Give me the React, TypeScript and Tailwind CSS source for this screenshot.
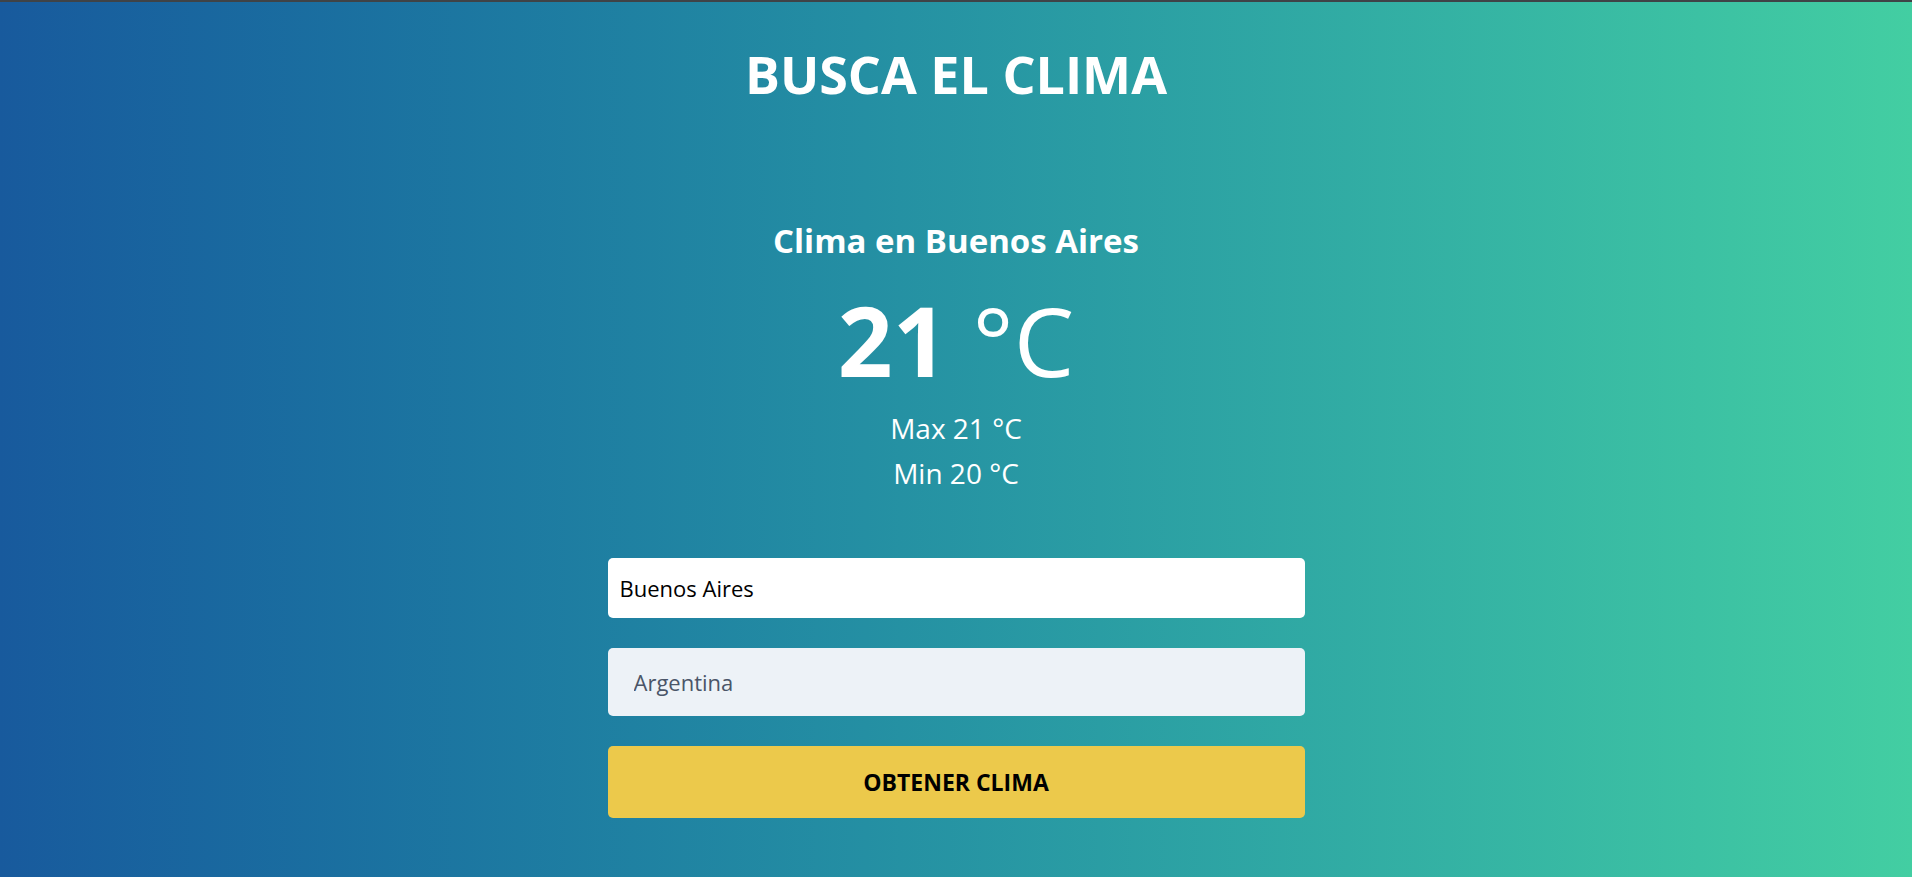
import React, { useState } from "react";

function App() {
  const [city, setCity] = useState("Buenos Aires");
  const [country, setCountry] = useState("Argentina");

  return (
    <div
      className="min-h-[877px] w-full border-t-2 border-[#3f4347] bg-gradient-to-r from-[#185a9d] to-[#43cea2] text-white"
      style={{ fontFamily: '"Open Sans", "Noto Sans", sans-serif' }}
    >
      <header className="flex justify-center pt-[46px]">
        <h1 className="text-[52px] font-bold leading-none">BUSCA EL CLIMA</h1>
      </header>

      <main className="flex flex-col items-center">
        <section className="mt-[124px] flex flex-col items-center">
          <h2 className="text-[33px] font-bold leading-none">Clima en Buenos Aires</h2>
          <p className="mt-[35px] text-[96px] font-bold leading-none">
            21 <span className="font-normal">°C</span>
          </p>
          <div className="mt-[18px] flex flex-col items-center text-[28px] leading-[45px]">
            <p>Max 21 °C</p>
            <p>Min 20 °C</p>
          </div>
        </section>

        <form
          className="mt-[62px] flex w-[697px] flex-col gap-[30px]"
          onSubmit={(e) => e.preventDefault()}
        >
          <input
            type="text"
            value={city}
            onChange={(e) => setCity(e.target.value)}
            className="h-[60px] w-full rounded-[5px] bg-white px-3 text-[22px] text-black outline-none"
          />
          <input
            type="text"
            value={country}
            onChange={(e) => setCountry(e.target.value)}
            placeholder="País"
            className="h-[68px] w-full rounded-[5px] bg-[#edf2f7] px-[26px] text-[22px] text-[#4a5568] outline-none"
          />
          <button
            type="submit"
            className="h-[72px] w-full rounded-[5px] bg-[#ecc94b] text-[23px] font-bold text-black"
          >
            OBTENER CLIMA
          </button>
        </form>
      </main>
    </div>
  );
}

export default App;
